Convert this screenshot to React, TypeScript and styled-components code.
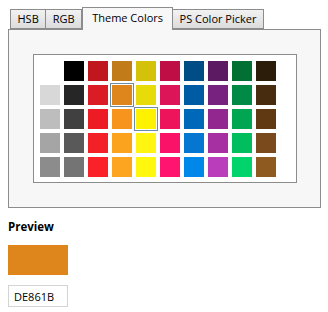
import React, { useState } from 'react'
import styled, { createGlobalStyle } from 'styled-components'

const GlobalStyle = createGlobalStyle`
  body {
    margin: 0;
    background: #ffffff;
    font-family: 'Open Sans', 'Noto Sans', sans-serif;
    font-size: 11px;
    color: #000;
  }
`

const tabs = ['HSB', 'RGB', 'Theme Colors', 'PS Color Picker']

const palette: (string | null)[][] = [
  [null, '#000000', '#C0161E', '#C27B19', '#D3C10A', '#BE0E45', '#004C85', '#5C1A63', '#017032', '#2C1C0A'],
  ['#D8D8D8', '#262626', '#DA1C24', '#DE861B', '#E8DB0A', '#DB1558', '#005BA5', '#76227E', '#008A45', '#472C0F'],
  ['#BDBDBD', '#404040', '#ED1C24', '#F7941D', '#FFF200', '#ED145B', '#0068B8', '#92278F', '#00A651', '#603913'],
  ['#A5A5A5', '#595959', '#F42028', '#FBA21F', '#FFF510', '#FA1168', '#0677D0', '#A62FA2', '#00BD5E', '#7B4A1C'],
  ['#8C8C8C', '#747474', '#FA2129', '#FDA420', '#FFF70D', '#FF1470', '#0087EA', '#BA3DBB', '#00D46A', '#8E5A1F'],
]

export default function App() {
  const [active, setActive] = useState(2)
  const [selected, setSelected] = useState('#DE861B')
  const hovered = '#FFF200'

  return (
    <Page>
      <GlobalStyle />
      <TabStrip>
        {tabs.map((t, i) => (
          <Tab key={t} $active={i === active} onClick={() => setActive(i)}>
            {t}
          </Tab>
        ))}
      </TabStrip>
      <Panel>
        <SwatchBox>
          <Grid>
            {palette.flat().map((c, i) =>
              c ? (
                <Swatch
                  key={i}
                  $color={c}
                  $ring={c === selected || c === hovered}
                  onClick={() => setSelected(c)}
                />
              ) : (
                <Blank key={i} />
              )
            )}
          </Grid>
        </SwatchBox>
      </Panel>
      <Heading>Preview</Heading>
      <PreviewSwatch $color={selected} />
      <HexField value={selected.replace('#', '')} readOnly />
    </Page>
  )
}

const Page = styled.div`
  padding: 7px 7px 0 8px;
`

const TabStrip = styled.div`
  display: flex;
  align-items: flex-end;
  padding-left: 2px;
  height: 22px;
  position: relative;
  z-index: 1;
`

const Tab = styled.div<{ $active: boolean }>`
  box-sizing: border-box;
  height: ${(p) => (p.$active ? '23px' : '20px')};
  margin-bottom: ${(p) => (p.$active ? '-1px' : '0')};
  padding: ${(p) => (p.$active ? '1px 9px 0' : '0 6.5px')};
  border: 1px solid #8c8c8c;
  border-bottom: ${(p) => (p.$active ? 'none' : '1px solid #8c8c8c')};
  border-left: ${(p) => (p.$active ? '1px solid #8c8c8c' : 'none')};
  background: ${(p) =>
    p.$active ? '#f7f7f7' : 'linear-gradient(#f2f2f2, #dcdcdc)'};
  font-size: 11px;
  line-height: 18px;
  white-space: nowrap;
  cursor: pointer;
  &:first-child {
    border-left: 1px solid #8c8c8c;
  }
`

const Panel = styled.div`
  width: 313px;
  box-sizing: border-box;
  border: 1px solid #8c8c8c;
  background: #f7f7f7;
  padding: 24px 23px 24px 24px;
`

const SwatchBox = styled.div`
  background: #ffffff;
  border: 1px solid #8c8c8c;
  height: 129px;
  box-sizing: border-box;
  padding: 6px;
`

const Grid = styled.div`
  display: grid;
  grid-template-columns: repeat(10, 20px);
  grid-auto-rows: 20px;
  gap: 4px;
`

const Swatch = styled.div<{ $color: string; $ring: boolean }>`
  background: ${(p) => p.$color};
  outline: ${(p) => (p.$ring ? '1px solid #6a8ca4' : 'none')};
  outline-offset: 1px;
  cursor: pointer;
`

const Blank = styled.div``

const Heading = styled.div`
  font-weight: bold;
  font-size: 11.5px;
  margin-top: 11px;
  line-height: 16px;
`

const PreviewSwatch = styled.div<{ $color: string }>`
  width: 60px;
  height: 30px;
  margin-top: 10px;
  background: ${(p) => p.$color};
`

const HexField = styled.input`
  display: block;
  margin-top: 10px;
  width: 60px;
  height: 22px;
  box-sizing: border-box;
  border: 1px solid #d4d4d4;
  padding: 0 5px;
  font-family: 'Open Sans', 'Noto Sans', sans-serif;
  font-size: 11px;
  color: #000;
  outline: none;
`
